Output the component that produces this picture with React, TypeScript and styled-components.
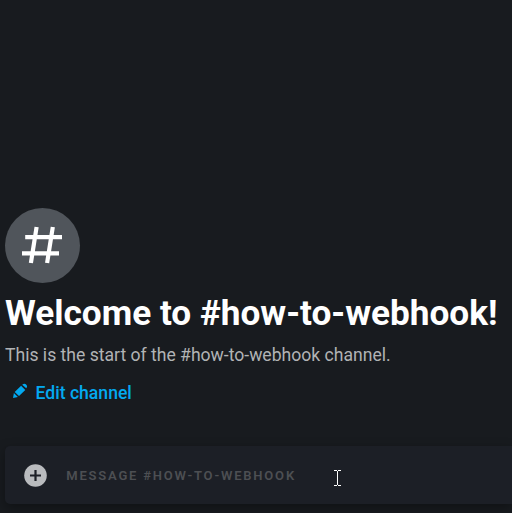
import React from "react";
import styled, { createGlobalStyle } from "styled-components";

const GlobalStyle = createGlobalStyle`
  * { box-sizing: border-box; }
  body { margin: 0; background: #181b1f; overflow: hidden; }
`;

const Chat = styled.main`
  position: relative;
  display: flex;
  flex-direction: column;
  width: 100%;
  height: 513px;
  padding: 208px 0 9px 5px;
  overflow: hidden;
  background: #181b1f;
  color: #fff;
  font-family: Roboto, "Liberation Sans", sans-serif;
`;

const ChannelBadge = styled.div`
  display: flex;
  flex: none;
  width: 75px;
  height: 75px;
  border-radius: 50%;
  background: #50555b;
`;

const Title = styled.h1`
  margin: 8px 0 0;
  font-size: 35.2px;
  font-weight: 700;
  line-height: 44px;
  letter-spacing: -0.01px;
  white-space: nowrap;
`;

const Description = styled.p`
  margin: 8px 0 0;
  color: #b1b3b5;
  font-size: 17.6px;
  line-height: 24px;
  letter-spacing: -0.01px;
  white-space: nowrap;
`;

const EditButton = styled.button`
  display: flex;
  align-items: center;
  align-self: flex-start;
  gap: 7.5px;
  height: 36px;
  margin: 8px 0 0;
  padding: 0 0 0 7px;
  border: 0;
  background: transparent;
  color: #03a9f0;
  font: 500 17.6px/24px Roboto, "Liberation Sans", sans-serif;
  white-space: nowrap;
`;

const PencilIcon = styled.svg`
  flex: none;
  margin-bottom: 4px;
`;

const Composer = styled.div`
  display: flex;
  align-items: center;
  gap: 19.3px;
  height: 58px;
  margin-top: auto;
  padding-left: 19px;
  border-radius: 5px 0 0 5px;
  background: #1c1f26;
  box-shadow: 0 4px 12px rgba(0, 0, 0, 0.35);
`;

const Placeholder = styled.span`
  padding-top: 2px;
  color: #4d4f53;
  font-size: 13px;
  font-weight: 600;
  letter-spacing: 1.8px;
  line-height: 20px;
  text-transform: uppercase;
  white-space: nowrap;
`;

const TextCursor = styled.svg`
  position: absolute;
  left: 334px;
  top: 470px;
`;

export default function App() {
  return (
    <>
      <GlobalStyle />
      <Chat>
        <ChannelBadge>
          <svg width="75" height="75" viewBox="0 0 75 75" fill="none" stroke="#fff" strokeWidth="4.2">
            <path d="M31.6 19 25.9 55M47.8 19 42.1 55M20.2 29.2H57M17 45.3h37" />
          </svg>
        </ChannelBadge>
        <Title>Welcome to #how-to-webhook!</Title>
        <Description>This is the start of the #how-to-webhook channel.</Description>
        <EditButton>
          <PencilIcon width="16" height="16" viewBox="0 0 16 16" fill="currentColor">
            <path d="M10.2 1.8Q12.3-.2 14.1 1.4Q16 3.2 14.2 5.3ZM9.1 2.7 13.3 6.9 7 13.1 2.7 8.9ZM1.9 9.9 5.9 13.9 1 15Z" />
          </PencilIcon>
          Edit channel
        </EditButton>
        <Composer>
          <svg width="23" height="23" viewBox="0 0 23 23">
            <circle cx="11.5" cy="11.5" r="11.3" fill="#b9bbbe" />
            <path d="M11.5 6v11M6 11.5h11" stroke="#1c1f26" strokeWidth="2.2" />
          </svg>
          <Placeholder>Message #how-to-webhook</Placeholder>
        </Composer>
        <TextCursor width="7" height="16" viewBox="0 0 7 16" fill="#fff" shapeRendering="crispEdges">
          <path d="M0 0h3v1H0zM4 0h3v1H4zM3 1h1v14H3zM0 15h3v1H0zM4 15h3v1H4z" />
        </TextCursor>
      </Chat>
    </>
  );
}
